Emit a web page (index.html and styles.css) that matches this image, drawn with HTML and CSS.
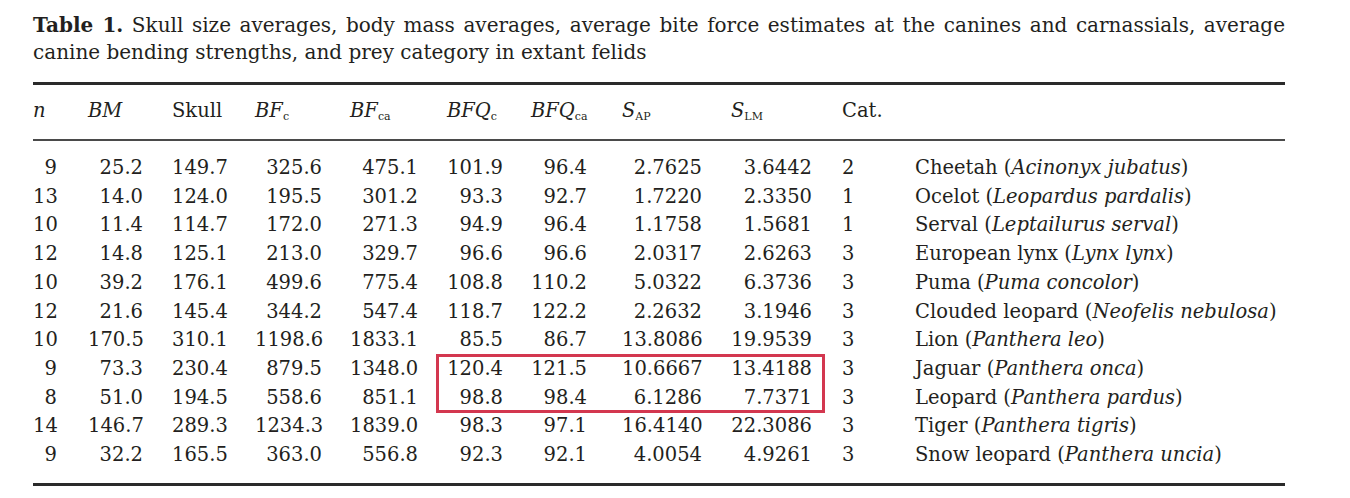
FILE: index.html
```html
<!DOCTYPE html>
<html>
<head>
<meta charset="utf-8">
<link rel="stylesheet" href="styles.css">
</head>
<body>
<div class="page">
  <div class="caption">
    <span class="cap-line cap-first"><b>Table 1.</b> Skull size averages, body mass averages, average bite force estimates at the canines and carnassials, average</span>
    <span class="cap-line">canine bending strengths, and prey category in extant felids</span>
  </div>
  <div class="table-wrap">
    <table class="data">
      <colgroup>
        <col class="c1"><col class="c2"><col class="c3"><col class="c4"><col class="c5"><col class="c6"><col class="c7"><col class="c8"><col class="c9"><col class="c10"><col class="c11">
      </colgroup>
      <thead>
        <tr>
          <th><i>n</i></th>
          <th><i>BM</i></th>
          <th>Skull</th>
          <th><i>BF</i><sub>c</sub></th>
          <th><i>BF</i><sub>ca</sub></th>
          <th><i>BFQ</i><sub>c</sub></th>
          <th><i>BFQ</i><sub>ca</sub></th>
          <th><i>S</i><sub>AP</sub></th>
          <th><i>S</i><sub>LM</sub></th>
          <th>Cat.</th>
          <th></th>
        </tr>
      </thead>
      <tbody>
        <tr><td>9</td><td>25.2</td><td>149.7</td><td>325.6</td><td>475.1</td><td>101.9</td><td>96.4</td><td>2.7625</td><td>3.6442</td><td class="cat">2</td><td class="sp">Cheetah (<i>Acinonyx jubatus</i>)</td></tr>
        <tr><td>13</td><td>14.0</td><td>124.0</td><td>195.5</td><td>301.2</td><td>93.3</td><td>92.7</td><td>1.7220</td><td>2.3350</td><td class="cat">1</td><td class="sp">Ocelot (<i>Leopardus pardalis</i>)</td></tr>
        <tr><td>10</td><td>11.4</td><td>114.7</td><td>172.0</td><td>271.3</td><td>94.9</td><td>96.4</td><td>1.1758</td><td>1.5681</td><td class="cat">1</td><td class="sp">Serval (<i>Leptailurus serval</i>)</td></tr>
        <tr><td>12</td><td>14.8</td><td>125.1</td><td>213.0</td><td>329.7</td><td>96.6</td><td>96.6</td><td>2.0317</td><td>2.6263</td><td class="cat">3</td><td class="sp">European lynx (<i>Lynx lynx</i>)</td></tr>
        <tr><td>10</td><td>39.2</td><td>176.1</td><td>499.6</td><td>775.4</td><td>108.8</td><td>110.2</td><td>5.0322</td><td>6.3736</td><td class="cat">3</td><td class="sp">Puma (<i>Puma concolor</i>)</td></tr>
        <tr><td>12</td><td>21.6</td><td>145.4</td><td>344.2</td><td>547.4</td><td>118.7</td><td>122.2</td><td>2.2632</td><td>3.1946</td><td class="cat">3</td><td class="sp">Clouded leopard (<i>Neofelis nebulosa</i>)</td></tr>
        <tr><td>10</td><td>170.5</td><td>310.1</td><td>1198.6</td><td>1833.1</td><td>85.5</td><td>86.7</td><td>13.8086</td><td>19.9539</td><td class="cat">3</td><td class="sp">Lion (<i>Panthera leo</i>)</td></tr>
        <tr><td>9</td><td>73.3</td><td>230.4</td><td>879.5</td><td>1348.0</td><td>120.4</td><td>121.5</td><td>10.6667</td><td>13.4188</td><td class="cat">3</td><td class="sp">Jaguar (<i>Panthera onca</i>)</td></tr>
        <tr><td>8</td><td>51.0</td><td>194.5</td><td>558.6</td><td>851.1</td><td>98.8</td><td>98.4</td><td>6.1286</td><td>7.7371</td><td class="cat">3</td><td class="sp">Leopard (<i>Panthera pardus</i>)</td></tr>
        <tr><td>14</td><td>146.7</td><td>289.3</td><td>1234.3</td><td>1839.0</td><td>98.3</td><td>97.1</td><td>16.4140</td><td>22.3086</td><td class="cat">3</td><td class="sp">Tiger (<i>Panthera tigris</i>)</td></tr>
        <tr><td>9</td><td>32.2</td><td>165.5</td><td>363.0</td><td>556.8</td><td>92.3</td><td>92.1</td><td>4.0054</td><td>4.9261</td><td class="cat">3</td><td class="sp">Snow leopard (<i>Panthera uncia</i>)</td></tr>
      </tbody>
    </table>
    <div class="highlight"></div>
  </div>
</div>
</body>
</html>
```
FILE: styles.css
```css
html, body {
  margin: 0;
  padding: 0;
  background: #ffffff;
}
body {
  font-family: "DejaVu Serif", "Liberation Serif", serif;
  color: #231f20;
}
.page {
  padding: 12px 0 0 33px;
  width: 1252px;
}
.caption {
  font-size: 20px;
  line-height: 27px;
}
.cap-line {
  display: block;
  white-space: nowrap;
}
.cap-first {
  text-align: justify;
  text-align-last: justify;
}
.caption b {
  font-weight: bold;
}
.table-wrap {
  position: relative;
  margin-top: 16px;
}
.data {
  width: 1252px;
  table-layout: fixed;
  border-collapse: collapse;
  font-size: 19.5px;
  border-top: 3px solid #2a2a2a;
  border-bottom: 3px solid #2a2a2a;
}
.c1 { width: 55px; }
.c2 { width: 84px; }
.c3 { width: 83px; }
.c4 { width: 95px; }
.c5 { width: 97px; }
.c6 { width: 84px; }
.c7 { width: 91px; }
.c8 { width: 109px; }
.c9 { width: 111px; }
.c10 { width: 73px; }
.c11 { width: 370px; }
.data th {
  font-weight: normal;
  text-align: left;
  padding: 11px 0 14px 0;
  line-height: 29px;
  white-space: nowrap;
  border-bottom: 2px solid #4a4a4a;
}
.data sub {
  font-size: 11px;
  vertical-align: -3px;
  line-height: 0;
}
.data td {
  text-align: right;
  padding: 0;
  line-height: 28.7px;
  white-space: nowrap;
}
.data tbody tr:first-child td {
  padding-top: 13px;
}
.data tbody tr:last-child td {
  padding-bottom: 13px;
}
.data td:nth-child(1) { padding-right: 31px; }
.data td:nth-child(2) { padding-right: 29px; }
.data td:nth-child(3) { padding-right: 29px; }
.data td:nth-child(4) { padding-right: 28px; }
.data td:nth-child(5) { padding-right: 29px; }
.data td:nth-child(6) { padding-right: 28px; }
.data td:nth-child(7) { padding-right: 35px; }
.data td:nth-child(8) { padding-right: 29px; }
.data td:nth-child(9) { padding-right: 30px; }
.data td.cat {
  text-align: left;
  padding-left: 0;
  margin-left: -2px;
}
.data td.sp {
  text-align: left;
}
.highlight {
  position: absolute;
  left: 403px;
  top: 272px;
  width: 383px;
  height: 53px;
  border: 3px solid #d3374f;
  pointer-events: none;
}
```
